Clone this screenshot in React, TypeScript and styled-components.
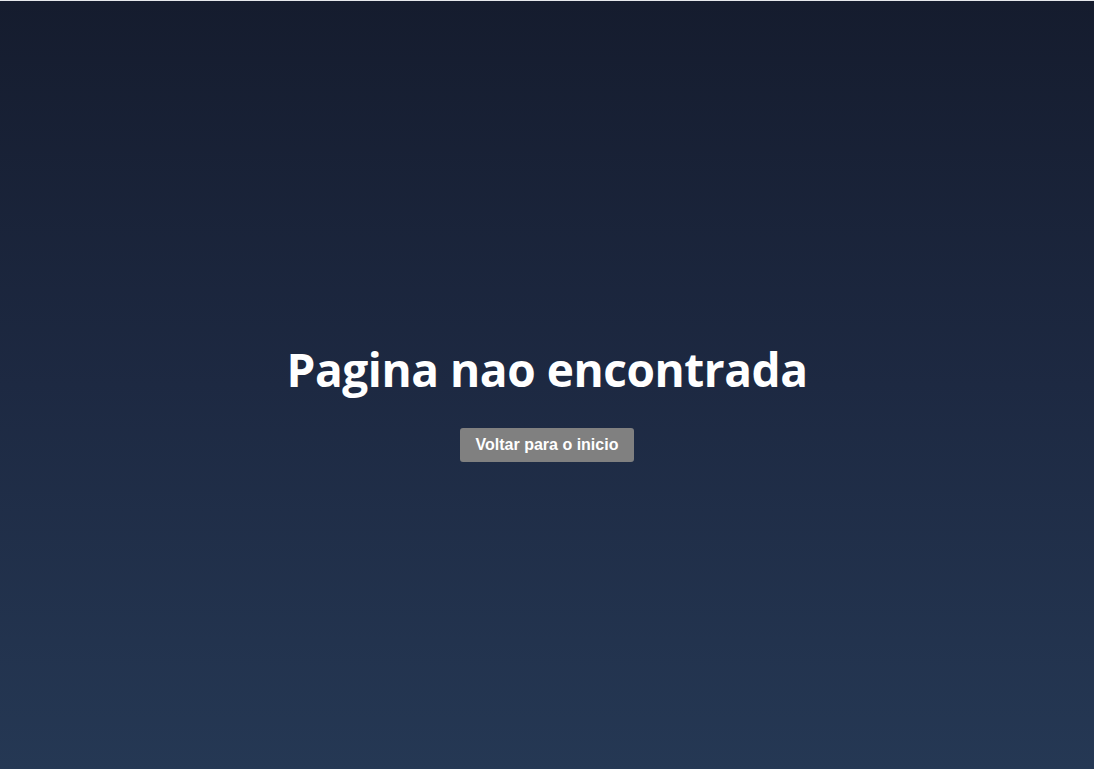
import React from "react";
import styled, { createGlobalStyle } from "styled-components";

const Global = createGlobalStyle`
  html, body { margin: 0; padding: 0; }
  body { background: #151c2e; }
`;

const Page = styled.main`
  box-sizing: border-box;
  min-height: 100vh;
  border-top: 1px solid #e6e8ec;
  background: linear-gradient(180deg, #151c2e 0%, #1d2942 50%, #253854 100%);
  display: flex;
  flex-direction: column;
  align-items: center;
  justify-content: center;
  padding-top: 34px;
`;

const Title = styled.h1`
  margin: 0 0 30px;
  color: #ffffff;
  font-family: "Open Sans", "DejaVu Sans", sans-serif;
  font-weight: 700;
  font-size: 46px;
  line-height: 1.2;
  letter-spacing: -0.45px;
`;

const HomeButton = styled.button`
  height: 34px;
  padding: 0 16px;
  border: none;
  border-radius: 3px;
  background: #808080;
  color: #ffffff;
  font-family: "Liberation Sans", Arial, sans-serif;
  font-weight: 700;
  font-size: 16px;
  cursor: pointer;
`;

export default function App() {
  return (
    <>
      <Global />
      <Page>
        <Title>Pagina nao encontrada</Title>
        <HomeButton>Voltar para o inicio</HomeButton>
      </Page>
    </>
  );
}
